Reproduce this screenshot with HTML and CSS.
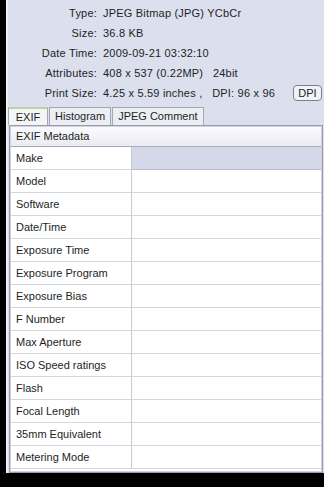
FILE: index.html
```html
<!DOCTYPE html>
<html>
  <head>
    <title>Image Properties</title>
    <link rel="stylesheet" href="styles.css">
  </head>
  <body>
    <div class="panel">
      <div class="info">
        <span class="label">Type:</span><span class="value">JPEG Bitmap (JPG) YCbCr</span>
        <span class="label">Size:</span><span class="value">36.8 KB</span>
        <span class="label">Date Time:</span><span class="value">2009-09-21 03:32:10</span>
        <span class="label">Attributes:</span><span class="value">408 x 537 (0.22MP)&nbsp;&nbsp; 24bit</span>
        <span class="label">Print Size:</span><span class="value print">4.25 x 5.59 inches ,&nbsp;&nbsp; DPI: 96 x 96 <button class="dpi">DPI</button></span>
      </div>

      <div class="tabs">
        <div class="tab active">EXIF</div>
        <div class="tab">Histogram</div>
        <div class="tab">JPEG Comment</div>
      </div>

      <div class="sheet">
        <div class="head">EXIF Metadata</div>
        <div class="grid">
          <div class="key">Make</div><div class="val selected"></div>
          <div class="key">Model</div><div class="val"></div>
          <div class="key">Software</div><div class="val"></div>
          <div class="key">Date/Time</div><div class="val"></div>
          <div class="key">Exposure Time</div><div class="val"></div>
          <div class="key">Exposure Program</div><div class="val"></div>
          <div class="key">Exposure Bias</div><div class="val"></div>
          <div class="key">F Number</div><div class="val"></div>
          <div class="key">Max Aperture</div><div class="val"></div>
          <div class="key">ISO Speed ratings</div><div class="val"></div>
          <div class="key">Flash</div><div class="val"></div>
          <div class="key">Focal Length</div><div class="val"></div>
          <div class="key">35mm Equivalent</div><div class="val"></div>
          <div class="key">Metering Mode</div><div class="val"></div>
        </div>
      </div>
    </div>
  </body>
</html>
```

FILE: styles.css
```css
body {
  margin: 0;
  background: #000;
  font-family: "Liberation Sans", Arial, sans-serif;
  font-size: 11px;
  color: #1e1e1e;
}
.panel {
  margin-left: 6px;
  height: 473px;
  background: #dcdfee;
  border-left: 2px solid #eef0f8;
  box-sizing: border-box;
  padding-top: 3px;
}
.info {
  display: grid;
  grid-template-columns: 89px 1fr;
  grid-auto-rows: 20px;
  align-items: center;
  column-gap: 6px;
  letter-spacing: 0.2px;
}
.label {
  text-align: right;
}
.value.print {
  display: flex;
  align-items: center;
}
.dpi {
  margin-left: auto;
  margin-right: 2px;
  height: 16px;
  width: 29px;
  padding: 0;
  font: inherit;
  letter-spacing: 0;
  color: #1e1e1e;
  background: #f2f3f8;
  border: 1px solid #7c7f8c;
  border-radius: 4px;
}
.tabs {
  display: flex;
  margin-top: 3px;
  height: 19px;
  align-items: flex-end;
}
.tab {
  height: 17px;
  line-height: 17px;
  padding: 0 5px;
  background: #eceef4;
  border: 1px solid #a4a7b4;
  border-bottom: none;
  margin-right: 1px;
}
.tab.active {
  height: 18px;
  width: 40px;
  padding: 0;
  box-sizing: border-box;
  text-align: center;
  background: #f4f6f6;
  border-top: 2px solid #b8d4a8;
}
.sheet {
  margin: 0 1px 0 1px;
  height: 348px;
  box-sizing: border-box;
  border: 1px solid #9a9cac;
  background: #fff;
  padding: 1px;
  box-shadow: inset 0 0 0 1px #d0d2e2;
}
.head {
  height: 19px;
  line-height: 19px;
  padding-left: 5px;
  background: linear-gradient(#fbfbfd, #eaebf3);
  border-bottom: 1px solid #a8aab8;
}
.grid {
  display: grid;
  grid-template-columns: 121px 1fr;
  grid-auto-rows: 23px;
}
.key,
.val {
  border-bottom: 1px solid #d4d6de;
  line-height: 22px;
}
.key {
  padding-left: 5px;
  border-right: 1px solid #c8cad4;
}
.val.selected {
  background: #d5d8e8;
  border-bottom-color: #b8bac8;
}
```
